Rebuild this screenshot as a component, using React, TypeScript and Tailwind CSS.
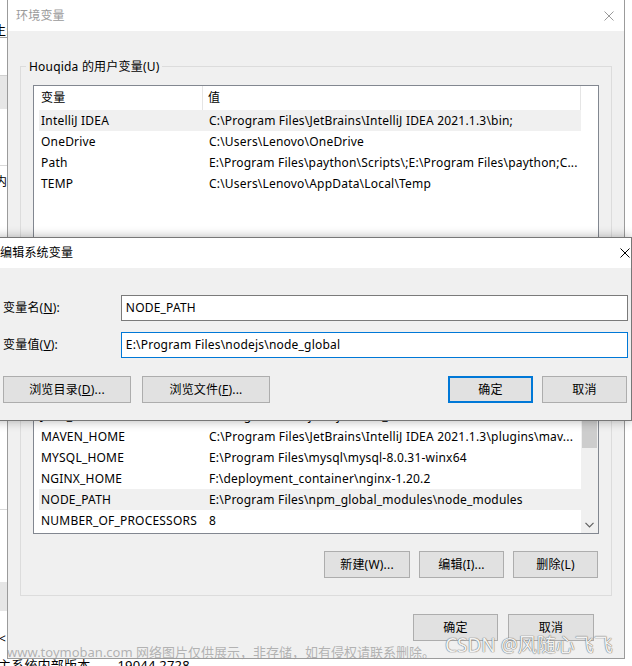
import React from "react";

const userVars = [
  { name: "IntelliJ IDEA", value: "C:\\Program Files\\JetBrains\\IntelliJ IDEA 2021.1.3\\bin;", selected: true },
  { name: "OneDrive", value: "C:\\Users\\Lenovo\\OneDrive" },
  { name: "Path", value: "E:\\Program Files\\paython\\Scripts\\;E:\\Program Files\\paython;C..." },
  { name: "TEMP", value: "C:\\Users\\Lenovo\\AppData\\Local\\Temp" },
];

const systemVars = [
  { name: "ComSpec", value: "C:\\WINDOWS\\system32\\cmd.exe" },
  { name: "DriverData", value: "C:\\Windows\\System32\\Drivers\\DriverData" },
  { name: "JAVA_HOME", value: "E:\\Program Files\\java\\jdk1.8.0_201" },
  { name: "MAVEN_HOME", value: "C:\\Program Files\\JetBrains\\IntelliJ IDEA 2021.1.3\\plugins\\mav..." },
  { name: "MYSQL_HOME", value: "E:\\Program Files\\mysql\\mysql-8.0.31-winx64" },
  { name: "NGINX_HOME", value: "F:\\deployment_container\\nginx-1.20.2" },
  { name: "NODE_PATH", value: "E:\\Program Files\\npm_global_modules\\node_modules", selected: true },
  { name: "NUMBER_OF_PROCESSORS", value: "8" },
];

type Row = { name: string; value: string; selected?: boolean };

const VarRow = ({ row }: { row: Row }) => (
  <div
    className={`ml-[5px] w-[542px] h-[21px] shrink-0 flex items-center whitespace-nowrap ${
      row.selected ? "bg-[#f0f0f0]" : ""
    }`}
  >
    <span className="w-[168px] pl-[2px] overflow-hidden">{row.name}</span>
    <span className="pl-[2px] overflow-hidden">{row.value}</span>
  </div>
);

const Btn = ({ children, w = "w-[85px]", primary = false }: { children: React.ReactNode; w?: string; primary?: boolean }) => (
  <div
    className={`${w} h-[27px] flex items-center justify-center bg-[#e1e1e1] ${
      primary ? "border-2 border-[#0078d7]" : "border border-[#adadad]"
    }`}
  >
    {children}
  </div>
);

const CloseX = ({ color }: { color: string }) => (
  <svg width="10" height="10" viewBox="0 0 10 10">
    <path d="M0.5 0.5 L9.5 9.5 M9.5 0.5 L0.5 9.5" stroke={color} strokeWidth="1" />
  </svg>
);

const GroupLabel = ({ children }: { children: React.ReactNode }) => (
  <div className="-mt-[9px] -ml-[7px] px-[3px] w-fit bg-[#f0f0f0] leading-[17px]">{children}</div>
);

export default function App() {
  return (
    <div className="relative w-[632px] h-[666px] overflow-hidden bg-white text-[12px] tracking-[0.2px] text-black font-['Noto_Sans','Noto_Sans_CJK_SC',sans-serif]">
      {/* window behind, only a thin strip shows at the left */}
      <div className="absolute left-0 top-0 w-[8px] h-full bg-white overflow-hidden">
        <div className="h-[25px]" />
        <div className="-ml-[6px] leading-[12px] text-[12px]">生:</div>
        <div className="h-[1px] bg-[#a0a0a0]" />
        <div className="h-[37px]" />
        <div className="h-[34px] bg-[#e6e6e6] border-t border-[#d0d0d0]" />
        <div className="h-[56px]" />
        <div className="h-[1px] bg-[#d9d9d9]" />
        <div className="h-[9px]" />
        <div className="-ml-[5px] leading-[14px]">内</div>
        <div className="h-[320px]" />
        <div className="h-[1px] bg-[#d9d9d9]" />
        <div className="h-[72px]" />
        <div className="h-[29px] bg-[#e6e6e6]" />
        <div className="h-[22px]" />
        <div className="-ml-[1px] leading-[12px]">&lt;</div>
      </div>

      {/* status line under the dialog */}
      <div className="absolute left-[-2px] top-[655px] flex gap-[27px] text-[13px] leading-[20px]">
        <span>主系统内部版本</span>
        <span>19044.2728</span>
      </div>

      {/* 环境变量 */}
      <div className="absolute left-[7px] top-[-1px] w-[618px] h-[660px] border border-[#9b9b9b] bg-[#f0f0f0] flex flex-col">
        <div className="h-[31px] shrink-0 bg-white flex items-center justify-between pl-[8px] pr-[10px]">
          <span className="text-[#9a9a9a]">环境变量</span>
          <CloseX color="#9a9a9a" />
        </div>
        <div className="flex-1 px-[12px] pt-[35px] flex flex-col">
          <div className="h-[222px] border border-[#dcdcdc] px-[12px]">
            <GroupLabel>Houqida 的用户变量(U)</GroupLabel>
            <div className="mt-[10px] h-[160px] border border-[#828790] bg-white">
              <div className="h-[24px] flex">
                <div className="w-[169px] border-r border-[#e5e5e5] pl-[7px] flex items-center">变量</div>
                <div className="w-[378px] border-r border-[#e5e5e5] pl-[5px] flex items-center">值</div>
              </div>
              {userVars.map((r) => (
                <VarRow key={r.name} row={r} />
              ))}
            </div>
            <div className="mt-[10px] flex justify-end gap-[9px]">
              <Btn>新建(N)...</Btn>
              <Btn>编辑(E)...</Btn>
              <Btn>删除(D)</Btn>
            </div>
          </div>

          <div className="mt-[18px] border border-[#dcdcdc] px-[12px] pb-[17px]">
            <GroupLabel>系统变量(S)</GroupLabel>
            <div className="mt-[10px] h-[209px] border border-[#828790] bg-white flex">
              <div className="flex-1 flex flex-col justify-end pb-[2px] overflow-hidden">
                {systemVars.map((r) => (
                  <VarRow key={r.name} row={r} />
                ))}
              </div>
              <div className="w-[17px] bg-[#f0f0f0] flex flex-col">
                <div className="h-[17px]" />
                <div className="h-[57px]" />
                <div className="h-[48px] mx-[1px] bg-[#cdcdcd]" />
                <div className="flex-1" />
                <div className="h-[17px] flex items-center justify-center">
                  <svg width="9" height="6" viewBox="0 0 9 6">
                    <path d="M0.5 0.8 L4.5 4.8 L8.5 0.8" fill="none" stroke="#606060" strokeWidth="1.2" />
                  </svg>
                </div>
              </div>
            </div>
            <div className="mt-[17px] flex justify-end gap-[9px] pr-[1px]">
              <Btn w="w-[86px]">新建(W)...</Btn>
              <Btn>编辑(I)...</Btn>
              <Btn>删除(L)</Btn>
            </div>
          </div>

          <div className="mt-[18px] flex justify-end gap-[10px] pr-[18px]">
            <Btn>确定</Btn>
            <Btn w="w-[86px]">取消</Btn>
          </div>
        </div>
      </div>

      {/* 编辑系统变量 */}
      <div className="absolute left-[-9px] top-[237px] w-[641px] h-[184px] border border-[#777777] bg-[#f0f0f0] flex flex-col shadow-[0_0_10px_rgba(0,0,0,0.3)]">
        <div className="h-[30px] shrink-0 bg-white flex items-center justify-between pl-[8px] pr-[1px]">
          <span>编辑系统变量</span>
          <CloseX color="#000000" />
        </div>
        <div className="pt-[27px] pr-[3px]">
          <div className="flex items-center">
            <span className="w-[129px] pl-[11px]">
              变量名(<span className="underline">N</span>):
            </span>
            <div className="w-[508px] h-[26px] border border-[#7a7a7a] bg-white pl-[4px] flex items-center">NODE_PATH</div>
          </div>
          <div className="mt-[11px] flex items-center">
            <span className="w-[129px] pl-[11px]">
              变量值(<span className="underline">V</span>):
            </span>
            <div className="w-[508px] h-[26px] border border-[#0078d7] bg-white pl-[4px] flex items-center">
              E:\Program Files\nodejs\node_global
            </div>
          </div>
          <div className="mt-[18px] flex items-center pl-[11px] pr-[1px]">
            <Btn w="w-[128px]">
              <span>
                浏览目录(<span className="underline">D</span>)...
              </span>
            </Btn>
            <div className="ml-[11px]">
              <Btn w="w-[128px]">
                <span>
                  浏览文件(<span className="underline">F</span>)...
                </span>
              </Btn>
            </div>
            <div className="flex-1" />
            <div className="flex gap-[9px]">
              <Btn w="w-[85px]" primary>
                确定
              </Btn>
              <Btn w="w-[85px]">取消</Btn>
            </div>
          </div>
        </div>
      </div>

      {/* watermarks */}
      <div className="absolute left-[7px] top-[643px] text-[13px] leading-[18px] tracking-normal whitespace-nowrap text-[rgba(150,150,150,0.7)]">
        www.toymoban.com 网络图片仅供展示，非存储，如有侵权请联系删除。
      </div>
      <div className="absolute left-[445px] top-[633px] text-[19px] leading-[24px] tracking-normal whitespace-nowrap text-[#f2f2f2] [text-shadow:0_0_1px_#666,0_0_1px_#666]">
        CSDN @风随心飞飞
      </div>
    </div>
  );
}
